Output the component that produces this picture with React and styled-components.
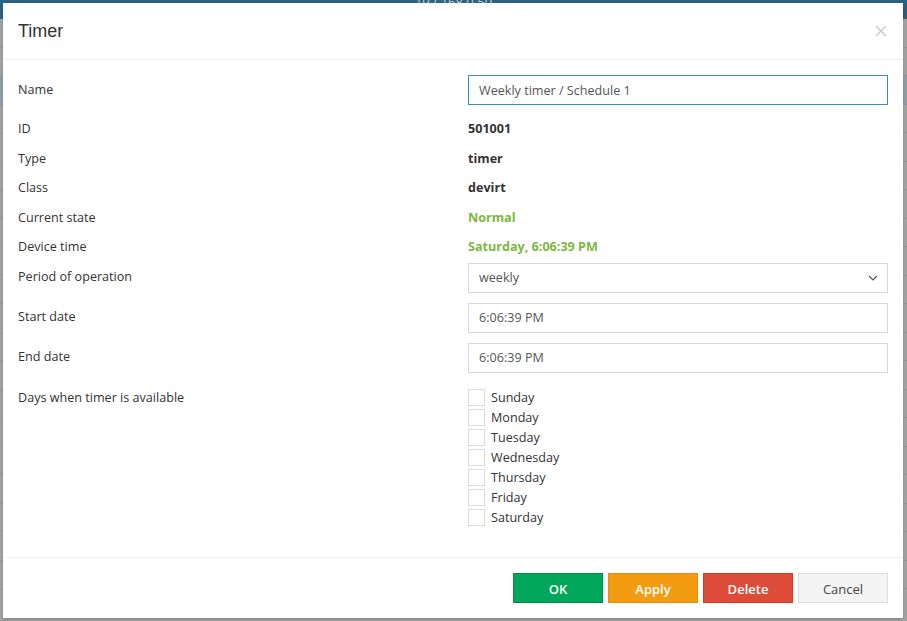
import React from "react";
import styled, { createGlobalStyle } from "styled-components";

const GlobalStyle = createGlobalStyle`
  html, body {
    margin: 0;
    padding: 0;
    width: 907px;
    height: 621px;
    overflow: hidden;
    background: #a5a5a5;
  }
  * { box-sizing: border-box; }
`;

const FONT = `"Open Sans", "Noto Sans", sans-serif`;

const days = ["Sunday", "Monday", "Tuesday", "Wednesday", "Thursday", "Friday", "Saturday"];

const App = () => {
    const [checked, setChecked] = React.useState({});

    return (
        <>
            <GlobalStyle />
            <Page>
                <TopBar>
                    <TopText>192.168.0.50</TopText>
                </TopBar>
                {Array.from({ length: 20 }).map((_, i) => (
                    <PageRow key={i} $active={i === 2} />
                ))}
            </Page>

            <Dialog>
                <Header>
                    <Title>Timer</Title>
                    <Close aria-label="close">
                        <svg width="12" height="12" viewBox="0 0 12 12">
                            <path d="M1 1 L11 11 M11 1 L1 11" stroke="#c9c9c9" strokeWidth="1.4" fill="none" />
                        </svg>
                    </Close>
                </Header>

                <Body>
                    <Field $input>
                        <Label>Name</Label>
                        <Control>
                            <TextInput $focused defaultValue="Weekly timer / Schedule 1" />
                        </Control>
                    </Field>

                    <Field>
                        <Label>ID</Label>
                        <Value>501001</Value>
                    </Field>
                    <Field>
                        <Label>Type</Label>
                        <Value>timer</Value>
                    </Field>
                    <Field>
                        <Label>Class</Label>
                        <Value>devirt</Value>
                    </Field>
                    <Field>
                        <Label>Current state</Label>
                        <Value $green>Normal</Value>
                    </Field>
                    <Field>
                        <Label>Device time</Label>
                        <Value $green>Saturday, 6:06:39 PM</Value>
                    </Field>

                    <Field $input>
                        <Label>Period of operation</Label>
                        <Control>
                            <SelectBox>
                                <span>weekly</span>
                                <svg width="10" height="6" viewBox="0 0 10 6">
                                    <path d="M1 1 L5 5 L9 1" stroke="#555" strokeWidth="1.2" fill="none" />
                                </svg>
                            </SelectBox>
                        </Control>
                    </Field>

                    <Field $input>
                        <Label>Start date</Label>
                        <Control>
                            <TextInput defaultValue="6:06:39 PM" />
                        </Control>
                    </Field>

                    <Field $input>
                        <Label>End date</Label>
                        <Control>
                            <TextInput defaultValue="6:06:39 PM" />
                        </Control>
                    </Field>

                    <Field $top>
                        <Label>Days when timer is available</Label>
                        <DayList>
                            {days.map((d) => (
                                <DayItem key={d}>
                                    <Box
                                        $on={!!checked[d]}
                                        onClick={() => setChecked(prev => ({ ...prev, [d]: !prev[d] }))}
                                    />
                                    {d}
                                </DayItem>
                            ))}
                        </DayList>
                    </Field>
                </Body>

                <Footer>
                    <Button $kind="ok">OK</Button>
                    <Button $kind="apply">Apply</Button>
                    <Button $kind="delete">Delete</Button>
                    <Button $kind="cancel">Cancel</Button>
                </Footer>
            </Dialog>
        </>
    );
};

export default App;

const Page = styled.div`
    width: 907px;
    height: 621px;
    background: #a5a5a5;
    display: flex;
    flex-direction: column;
    overflow: hidden;
`;

const TopBar = styled.div`
    height: 19px;
    flex: none;
    background: #2a6384;
    display: flex;
    justify-content: center;
    overflow: hidden;
`;

const TopText = styled.span`
    font-family: ${FONT};
    font-size: 13px;
    line-height: 13px;
    color: #c3cdd4;
    margin-top: -4px;
`;

const PageRow = styled.div`
    height: 28.5px;
    flex: none;
    border-bottom: 1px solid #979797;
    background: ${p => (p.$active ? "#8ea3ae" : "#a5a5a5")};
`;

const Dialog = styled.div`
    position: absolute;
    left: 3px;
    top: 3px;
    width: 900px;
    height: 615px;
    background: #fff;
    box-shadow: 0 2px 4px rgba(0, 0, 0, 0.2);
    display: flex;
    flex-direction: column;
    font-family: ${FONT};
    color: #333;
`;

const Header = styled.div`
    height: 57px;
    flex: none;
    padding: 0 15px;
    border-bottom: 1px solid #f0f0f0;
    display: flex;
    align-items: center;
    justify-content: space-between;
`;

const Title = styled.h4`
    margin: 0;
    font-family: "Liberation Sans", Arial, sans-serif;
    font-weight: 400;
    font-size: 18px;
    color: #333;
    padding-top: 1px;
`;

const Close = styled.button`
    border: 0;
    background: none;
    padding: 0;
    margin-right: 1px;
    width: 12px;
    height: 12px;
    display: flex;
    cursor: pointer;
`;

const Body = styled.div`
    flex: 1;
    padding: 15px 15px 0;
    display: flex;
    flex-direction: column;
`;

const Field = styled.div`
    display: grid;
    grid-template-columns: 420px 420px;
    column-gap: 30px;
    align-items: ${p => (p.$top ? "start" : "center")};
    min-height: ${p => (p.$input ? "30px" : "29.5px")};
    margin-bottom: ${p => (p.$input ? "10px" : "0")};
    padding-top: ${p => (p.$top ? "6px" : "0")};
    font-size: 12.6px;
`;

const Label = styled.div`
    font-size: 12.6px;
    line-height: 18px;
    padding-bottom: 1px;
`;

const Control = styled.div`
    display: flex;
`;

const Value = styled.div`
    font-weight: 700;
    font-size: 12.6px;
    line-height: 18px;
    padding-bottom: 1px;
    color: ${p => (p.$green ? "#7cb842" : "#333")};
`;

const TextInput = styled.input`
    width: 420px;
    height: 30px;
    padding: 0 10px;
    border: 1px solid ${p => (p.$focused ? "#3c8dbc" : "#d2d6de")};
    font-family: ${FONT};
    font-size: 12.6px;
    color: #555;
    outline: none;
    border-radius: 0;
`;

const SelectBox = styled.div`
    width: 420px;
    height: 30px;
    padding: 0 9px 0 10px;
    border: 1px solid #d2d6de;
    display: flex;
    align-items: center;
    justify-content: space-between;
    font-size: 12.6px;
    color: #555;
`;

const DayList = styled.div`
    display: flex;
    flex-direction: column;
    margin-top: -1px;
`;

const DayItem = styled.label`
    height: 20px;
    display: flex;
    align-items: center;
    gap: 6px;
    font-size: 12.6px;
    color: #333;
    cursor: pointer;
`;

const Box = styled.span`
    width: 17px;
    height: 17px;
    border: 1px solid #dcdcdc;
    background: ${p => (p.$on ? "#3c8dbc" : "#fff")};
`;

const kinds = {
    ok: { bg: "#00a65a", border: "#008d4c", color: "#fff" },
    apply: { bg: "#f39c12", border: "#e08e0b", color: "#fff" },
    delete: { bg: "#dd4b39", border: "#d73925", color: "#fff" },
    cancel: { bg: "#f4f4f4", border: "#dddddd", color: "#444" },
};

const Footer = styled.div`
    flex: none;
    height: 61px;
    padding: 15px;
    border-top: 1px solid #f0f0f0;
    display: flex;
    justify-content: flex-end;
    gap: 5px;
`;

const Button = styled.button`
    width: 90px;
    height: 30px;
    padding: 1px 0 0;
    border: 1px solid ${p => kinds[p.$kind].border};
    background: ${p => kinds[p.$kind].bg};
    color: ${p => kinds[p.$kind].color};
    font-family: ${FONT};
    font-size: 13px;
    font-weight: ${p => (p.$kind === "cancel" ? 400 : 600)};
    border-radius: 0;
    cursor: pointer;
`;
